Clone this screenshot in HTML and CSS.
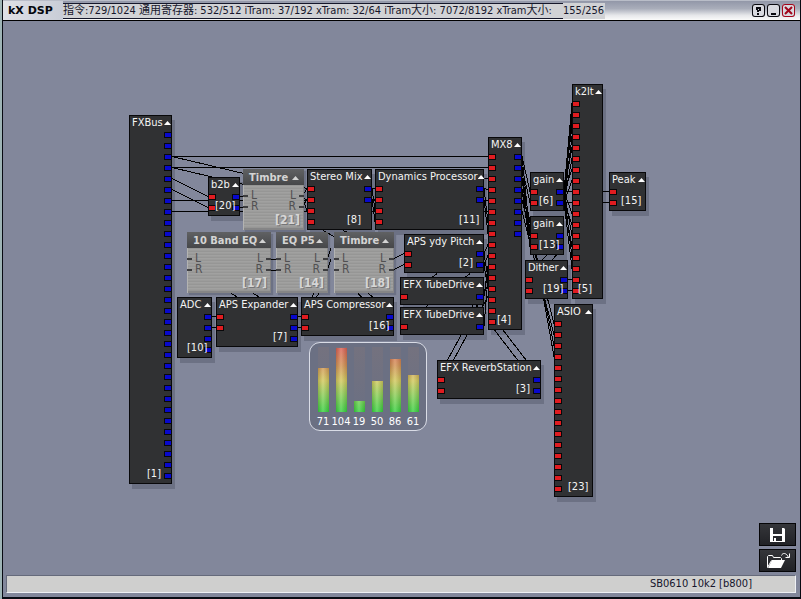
FILE: index.html
```html
<!DOCTYPE html>
<html lang="zh-CN">
<head>
<meta charset="utf-8">
<title>kX DSP</title>
<link rel="stylesheet" href="styles.css">
</head>
<body>
<div class="window">
  <header class="titlebar">
    <h1 class="app-name">kX DSP</h1>
    <p class="usage"><span class="usage-box">指令:729/1024 通用寄存器: 532/512 iTram: 37/192 xTram: 32/64 iTram大小: 7072/8192 xTram大小:</span><span class="usage-rest">155/256</span></p>
    <div class="window-controls">
      <button class="control" type="button" aria-label="Help"><svg viewBox="0 0 13 13" width="13" height="13"><path d="M4 3h5v4H7v1H5V6h2V5H6v1H4zM5 9h2v2H5z" fill="currentColor"/></svg></button>
      <button class="control" type="button" aria-label="Minimize"><svg viewBox="0 0 13 13" width="13" height="13"><path d="M4 9h5v2H4z" fill="currentColor"/></svg></button>
      <button class="control control-close" type="button" aria-label="Close"><svg viewBox="0 0 13 13" width="13" height="13"><path d="M3 3l7 7M10 3l-7 7" stroke="currentColor" stroke-width="2"/></svg></button>
    </div>
  </header>
  <main class="canvas" id="canvas">
    <svg class="wires" aria-hidden="true"><g id="wires" transform="translate(-3 -21)"></g></svg>
    <div class="meter" id="meter"></div>
    <div class="file-actions">
      <button class="file-button" type="button" aria-label="Save"><svg viewBox="0 0 37 23" width="37" height="23"><path fill="#fff" fill-rule="evenodd" d="M11 5h14l1 1v13H11zM14 5v6h9V5zM14 13v5h9v-5zM15 15h2v3h-2z"/></svg></button>
      <button class="file-button" type="button" aria-label="Open"><svg viewBox="0 0 37 23" width="37" height="23"><path fill="none" stroke="#fff" d="M8.500 18.500v-11l1-1h4l1 2h7l1 1v3M8.500 18.500l4-7"/><path fill="#fff" d="M13 11h13l-4 8H9z"/><path fill="none" stroke="#fff" d="M22.500 6.500c1-3 5-3 7 2M26.500 8.500h4v-4"/></svg></button>
    </div>
  </main>
  <footer class="statusbar">SB0610 10k2 [b800]</footer>
</div>
<script src="script.js"></script>
</body>
</html>
```
FILE: styles.css
```css
* { box-sizing: border-box; }

body {
  margin: 0;
  background: #9fb5b6;
  font-family: "DejaVu Sans Condensed", "DejaVu Sans", "Noto Sans CJK SC", sans-serif;
  font-stretch: condensed;
  font-size: 11px;
  line-height: 14px;
}

button { padding: 0; font: inherit; cursor: pointer; }

svg { display: block; }

.window {
  display: flex;
  flex-direction: column;
  height: 100vh;
  margin-left: 2px;
  border: solid #080a12;
  border-width: 0 1px 2px;
  background: #82879b;
}

.titlebar {
  display: flex;
  align-items: center;
  height: 21px;
  border-top: 1px solid #b9bdc8;
  border-bottom: 1px solid #000;
  background: linear-gradient(#9297a8, #a9adba 40%, #e6e7ea 75%, #fafafa);
}

.app-name {
  align-self: stretch;
  width: 60px;
  margin: 0;
  padding: 3px 0 0 5px;
  background: linear-gradient(90deg, #dfe1e6, #c8ccd6);
  color: #05070d;
  font-family: "DejaVu Sans", sans-serif;
  font-stretch: normal;
  font-size: 11px;
  font-weight: bold;
}

.usage {
  display: flex;
  margin: 0;
  color: #17172c;
  font-family: "DejaVu Sans Condensed", "Noto Sans CJK SC", sans-serif;
  white-space: nowrap;
}

.usage-box {
  width: 500px;
  height: 16px;
  border: solid #15172a;
  border-width: 1px 0;
  background: #d1d2d5;
}

.usage-rest { padding: 1px 1px 0 0; background: #d1d2d5; }

.window-controls { display: flex; gap: 2px; margin-left: auto; padding-right: 5px; }

.control {
  width: 13px;
  height: 13px;
  border: 0;
  border-radius: 3px;
  box-shadow: inset 0 0 0 1px currentColor;
  background: #d9dae0;
  color: #0a0a10;
}

.control-close { color: #a1071c; }

.canvas { position: relative; flex: 1; overflow: hidden; isolation: isolate; }

.wires { position: absolute; inset: 0; width: 100%; height: 100%; }

.wires path { fill: none; stroke: #000; shape-rendering: crispEdges; }

.node {
  position: absolute;
  display: flex;
  flex-direction: column;
  padding-bottom: 3px;
  background: #303133;
  box-shadow: inset 0 0 0 1px #08080a;
  color: #f4f4f4;
}

/* The drop shadow lies below the wires, the node itself above them. */
.node::before {
  content: "";
  position: absolute;
  inset: 0;
  z-index: -1;
  box-shadow: 3px 5px 0 #6c7184;
}

.node-head {
  display: flex;
  justify-content: space-between;
  height: 14px;
  padding: 2px 1px 0 3px;
  line-height: 12px;
  white-space: nowrap;
}

.node-name { margin: 0; font-size: 11px; font-weight: normal; }

.toggle {
  flex: none;
  width: 7px;
  height: 4px;
  margin-top: 4px;
  border: 0;
  background: #fff;
  clip-path: polygon(50% 0, 100% 100%, 0 100%);
}

.ports { display: flex; justify-content: space-between; }

.port { display: block; height: 11px; padding-top: 3px; line-height: 11px; }

.port::before {
  content: "";
  display: block;
  width: 6px;
  height: 4px;
  border: 1px solid #08080a;
}

.in .port::before { background: #e01c20; }
.out .port::before { background: #0808cc; }

.node-id {
  position: absolute;
  right: 0;
  bottom: 4px;
  width: 25px;
  line-height: 12px;
}

.plate {
  background: repeating-linear-gradient(#9c9c9b 0 1px, #969695 1px 2px, #a1a1a0 2px 3px);
  box-shadow: inset 1px 0 #b3b3b1, inset -1px -2px #858586;
  color: #505052;
}

.plate::before { box-shadow: 2px 2px 1px #6c7184; }

.plate .node-head {
  height: 16px;
  padding: 3px 5px 0 6px;
  background: linear-gradient(#606163, #464749);
  color: #d4d4d4;
}

.plate .node-name { font-weight: bold; }

.plate .toggle { background: #d4d4d4; }

.plate .ports { padding-top: 5px; }

.plate .port { display: flex; align-items: center; gap: 3px; padding: 0; font-size: 12px; }

.plate .out .port { flex-direction: row-reverse; }

.plate .port::before { width: 5px; height: 2px; border: 0; background: #3e3e40; }

.plate .node-id {
  width: 29px;
  font-size: 12px;
  font-weight: bold;
  color: #d6d6d6;
  text-shadow: 1px 1px #747476;
}

.meter {
  position: absolute;
  left: 306px;
  top: 321px;
  display: flex;
  padding: 4px 4px 0;
  border: 1px solid #d9dce6;
  border-radius: 11px;
  background: #6b7083;
}

.level { width: 18px; color: #fff; }

.level-track {
  display: flex;
  align-items: flex-end;
  width: 11px;
  height: 65px;
  margin: 0 auto 3px;
  background: linear-gradient(#74727f, #6b7083);
}

.level-fill {
  width: 100%;
  background:
    linear-gradient(90deg, #0002, #fff3 45%, #0002),
    linear-gradient(#db5d54, #d39052 28%, #d2c95b 52%, #87cf55 75%, #35d13d) bottom / 100% 65px no-repeat;
}

.level-value { display: flex; justify-content: center; height: 15px; }

.file-actions {
  position: absolute;
  right: 4px;
  bottom: 3px;
  display: flex;
  flex-direction: column;
  gap: 3px;
}

.file-button {
  width: 37px;
  height: 23px;
  border: 0;
  background: linear-gradient(#36373b, #202125);
  box-shadow: inset 0 0 0 1px #050507;
}

.statusbar {
  height: 18px;
  margin: 0 4px 4px 3px;
  padding: 1px 43px 0 0;
  border: 1px solid;
  border-color: #656a7b #eef0f4 #eef0f4 #656a7b;
  background: #cfcfce;
  color: #15152c;
  text-align: right;
}
```
FILE: script.js
```js
// Window coordinates of the canvas' top left corner.
const origin = { x: 3, y: 21 };

// name, id, x, y, width, inputs, outputs
const modules = [
  ["FXBus", 1, 129, 115, 43, 0, 32],
  ["b2b", 20, 208, 177, 32, 2, 2],
  ["Stereo Mix", 8, 307, 169, 65, 4, 2],
  ["Dynamics Processor", 11, 375, 169, 109, 4, 2],
  ["APS ydy Pitch", 2, 404, 234, 80, 2, 2],
  ["EFX TubeDrive", null, 400, 277, 84, 1, 1],
  ["EFX TubeDrive", null, 400, 307, 84, 1, 1],
  ["ADC", 10, 177, 297, 35, 0, 4],
  ["APS Expander", 7, 216, 297, 82, 2, 3],
  ["APS Compressor", 16, 301, 297, 93, 2, 2],
  ["EFX ReverbStation", 3, 437, 360, 104, 2, 2],
  ["MX8", 4, 488, 137, 34, 16, 8],
  ["gain", 6, 530, 172, 34, 2, 2],
  ["gain", 13, 530, 216, 34, 2, 2],
  ["Dither", 19, 525, 260, 43, 2, 2],
  ["k2lt", 5, 572, 84, 31, 18, 0],
  ["Peak", 15, 609, 172, 37, 2, 0],
  ["ASIO", 23, 554, 304, 39, 16, 0]
];

// name, id, x, y, width
const plates = [
  ["Timbre", 21, 243, 169, 61],
  ["10 Band EQ", 17, 187, 232, 84],
  ["EQ P5", 14, 276, 232, 52],
  ["Timbre", 18, 334, 232, 60]
];

// x1, y1, x2, y2
const links = [
  [172,156,488,156],[172,167,488,167],[172,156,307,188],[172,167,307,199],
  [172,178,208,196],[172,189,208,207],[172,200,488,200],[172,211,488,211],
  [240,196,246,196],[240,207,246,207],[302,196,307,188],[302,207,307,199],[302,196,307,210],
  [372,188,375,188],[372,199,375,199],[372,188,375,210],[372,199,375,221],
  [484,178,488,178],[484,188,488,222],[484,199,488,233],[484,188,488,189],
  [271,259,276,259],[271,270,276,270],[327,259,331,248],[327,270,331,259],
  [392,259,404,253],[392,270,404,264],
  [484,253,488,244],[484,264,488,255],[484,253,488,277],[484,264,488,288],
  [484,296,488,266],[484,326,488,277],
  [212,316,216,316],[212,327,216,327],[298,316,301,316],[298,327,301,327],
  [231,293,240,298],[253,293,262,298],[314,293,311,298],[319,293,315,298],
  [358,293,363,298],[368,293,375,298],[323,230,334,236],[343,230,348,232],
  [437,273,432,277],[470,273,465,277],[428,305,425,307],[473,305,472,307],[478,305,477,307],
  [522,156,530,191],[522,167,530,202],[522,178,530,235],[522,189,530,246],
  [522,156,530,235],[522,167,530,246],
  [522,200,554,323],[522,211,554,334],[522,189,554,345],[522,178,554,356],
  [522,222,437,379],[522,233,437,390],
  [541,379,488,310],[541,390,488,321],
  [564,235,525,279],[564,246,525,290],
  [564,191,572,103],[564,202,572,114],[564,191,572,125],[564,202,572,136],
  [564,191,572,147],[564,202,572,158],[564,191,572,169],[564,202,572,180],
  [564,191,572,213],[564,202,572,224],[564,191,572,235],[564,202,572,246],
  [564,191,572,257],[564,202,572,268],
  [564,191,609,191],[564,202,609,202],[568,279,572,279],[568,290,572,290]
];

const levels = [[71, 44], [104, 64], [19, 11], [50, 31], [86, 53], [61, 37]];

const canvas = document.getElementById("canvas");

function port(count, side, labels) {
  let html = "";
  for (let i = 0; i < count; i++) html += `<span class="port">${labels ? labels[i] : ""}</span>`;
  return `<div class="${side}">${html}</div>`;
}

function addNode([name, id, x, y, width, inputs, outputs], labels) {
  const node = document.createElement("section");
  node.className = labels ? "node plate" : "node";
  node.style.left = `${x - origin.x}px`;
  node.style.top = `${y - origin.y}px`;
  node.style.width = `${width}px`;
  if (labels) node.style.height = "61px";
  node.innerHTML =
    `<div class="node-head"><h2 class="node-name">${name}</h2>` +
    `<button class="toggle" type="button" aria-label="Collapse"></button></div>` +
    `<div class="ports">${port(inputs, "in", labels)}${port(outputs, "out", labels)}</div>` +
    (id === null ? "" : `<span class="node-id">[${id}]</span>`);
  canvas.insertBefore(node, document.getElementById("meter"));
}

plates.forEach(p => addNode([...p, 2, 2], ["L", "R"]));
modules.forEach(m => addNode(m));

document.getElementById("wires").innerHTML = links
  .map(([a, b, c, d]) => `<path d="M${a} ${b + 0.5}L${c} ${d + 0.5}"/>`)
  .join("");

document.getElementById("meter").innerHTML = levels
  .map(([value, height]) =>
    `<div class="level"><div class="level-track"><div class="level-fill" style="height:${height}px"></div></div>` +
    `<span class="level-value">${value}</span></div>`)
  .join("");
```
